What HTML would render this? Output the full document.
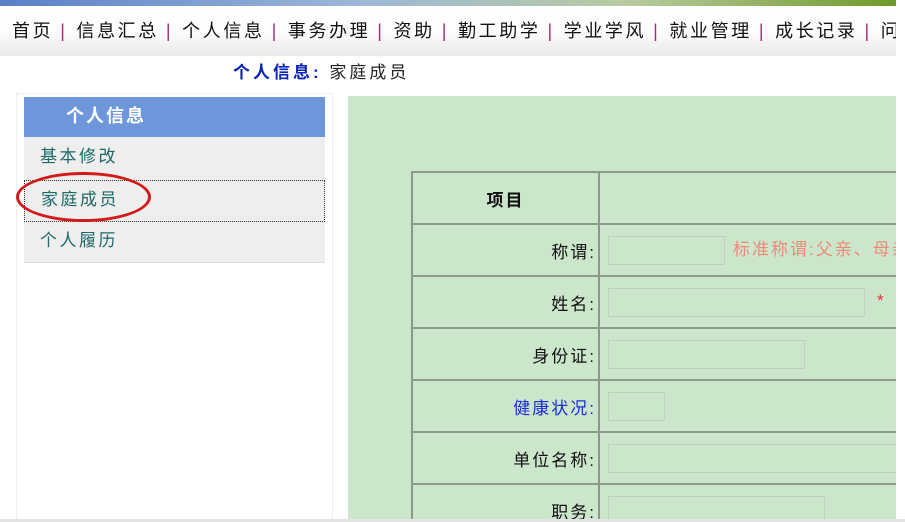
<!DOCTYPE html>
<html><head><meta charset="utf-8"><style>
*{margin:0;padding:0;box-sizing:border-box}
html,body{width:905px;height:522px;overflow:hidden}
body{background:#fff;font-family:"Liberation Sans","Noto Sans CJK SC","WenQuanYi Zen Hei",sans-serif;position:relative;letter-spacing:3px}
.top{position:absolute;left:0;top:0;width:896px;height:6px;background:linear-gradient(90deg,#5a7fc8,#9db7d8 40%,#b8cba0 70%,#6f9a2a)}
.nav{position:absolute;left:0;top:8px;width:896px;height:48px;background:linear-gradient(#fff,#fdfdfd 50%,#e9e9e9);font-size:18px;line-height:46px;color:#111;white-space:nowrap;overflow:hidden;padding-left:12px;letter-spacing:2.6px}
.nav b{font-weight:normal;color:#a0307a;margin:0 9px 0 7px}
.crumb{position:absolute;left:233px;top:62px;font-size:17px;line-height:22px;color:#222;letter-spacing:3px}
.crumb span{color:#0b22b8;font-weight:bold}
.side{position:absolute;left:16px;top:93px;width:317px;height:430px;border:1px solid #eee}
.sh{position:absolute;left:24px;top:97px;width:301px;height:40px;background:#6d96db;color:#fff;font-weight:bold;font-size:18px;line-height:38px;padding-left:42px;letter-spacing:2px}
.it{position:absolute;left:24px;width:301px;background:#eee;color:#1f6a66;font-size:17px;padding-left:16px;letter-spacing:2.5px}
.panel{position:absolute;left:348px;top:96px;width:548px;height:426px;background:#cce6cc}
table{position:absolute;left:411px;top:171px;border-collapse:collapse;width:600px}
td{border:2px solid #8a998a;height:52px;font-size:17px;color:#111;white-space:nowrap;overflow:hidden;letter-spacing:2px}
td.l{width:187px;text-align:right;padding-right:2px}
.in{display:inline-block;height:29px;border:1px solid #bcd4bc;vertical-align:middle;margin-left:8px}
.ellipse{position:absolute;left:16px;top:172px;width:135px;height:50px;border:3px solid #d21a1a;border-radius:50%}
</style></head><body>
<div class="top"></div>
<div class="nav">首页<b>|</b>信息汇总<b>|</b>个人信息<b>|</b>事务办理<b>|</b>资助<b>|</b>勤工助学<b>|</b>学业学风<b>|</b>就业管理<b>|</b>成长记录<b>|</b>问卷调查</div>
<div class="crumb"><span>个人信息:</span> 家庭成员</div>
<div class="side"></div>
<div class="sh">个人信息</div>
<div class="it" style="top:137px;height:43px;line-height:40px">基本修改</div>
<div class="it" style="top:180px;height:42px;line-height:38px;border:1px dotted #333">家庭成员</div>
<div class="it" style="top:222px;height:41px;line-height:38px;border-bottom:1px solid #ddd">个人履历</div>
<div class="ellipse"></div>
<div class="panel"></div>
<table>
<tr><td class="l" style="text-align:center;font-weight:bold;padding:0">项目</td><td></td></tr>
<tr><td class="l">称谓:</td><td><span class="in" style="width:117px"></span><span style="color:#ee8a7a;margin-left:8px">标准称谓:父亲、母亲</span></td></tr>
<tr><td class="l">姓名:</td><td><span class="in" style="width:257px"></span><span style="color:#e03030;margin-left:12px">*</span></td></tr>
<tr><td class="l">身份证:</td><td><span class="in" style="width:197px"></span></td></tr>
<tr><td class="l" style="color:#1a2ed0">健康状况:</td><td><span class="in" style="width:57px"></span></td></tr>
<tr><td class="l">单位名称:</td><td><span class="in" style="width:320px"></span></td></tr>
<tr><td class="l">职务:</td><td><span class="in" style="width:217px"></span></td></tr>
</table>
<div style="position:absolute;left:0;top:519px;width:905px;height:3px;background:#e4e4e4"></div>
<div style="position:absolute;left:896px;top:0;width:9px;height:519px;background:#fff"></div>
</body></html>
